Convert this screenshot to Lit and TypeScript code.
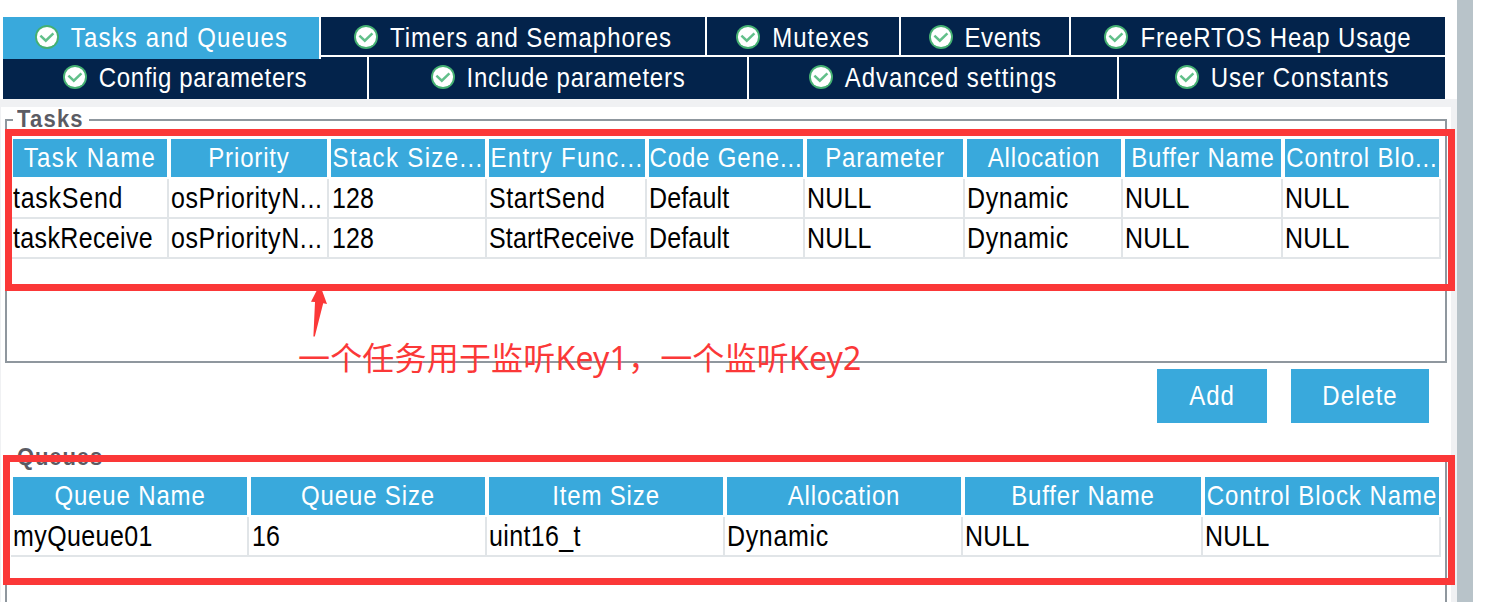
import { LitElement, html, css } from "lit";
import { customElement, property } from "lit/decorators.js";

const tracking: Record<string, number> = {
  "Tasks and Queues": 0.22,
  "Events": -0.35,
  "FreeRTOS Heap Usage": -0.12,
  "Config parameters": -0.3,
  "Include parameters": -0.2,
  "Task Name": 0.55,
  "Stack Size...": 0.5,
  "Entry Func...": 0.45,
  "Control Blo...": 0.05,
  "Control Block Name": 0.1,
  "osPriorityN...": 0.45,
  "taskSend": 0.6,
  "taskReceive": 0.2,
  "Dynamic": 0.5,
  "myQueue01": 0.25,
  "StartSend": 0.45,
  "StartReceive": 0.05,
  "uint16_t": 0.2,
};
const track = (s: string) => `--track:${tracking[s] ?? 0}px`;

@customElement("check-icon")
class CheckIcon extends LitElement {
  static styles = css`
    :host { display: block; width: 24px; height: 24px; flex: none; }
    svg { display: block; }
  `;
  render() {
    return html`<svg width="24" height="24" viewBox="0 0 24 24">
      <circle cx="12" cy="12" r="12" fill="#45b072" />
      <circle cx="12" cy="12" r="10.1" fill="#ffffff" />
      <path d="M5.4 10.6 L10.8 15.7 L18.4 8.4" fill="none" stroke="#62c08a" stroke-width="2.5" />
    </svg>`;
  }
}

@customElement("data-grid")
class DataGrid extends LitElement {
  @property({ attribute: false }) widths: number[] = [];
  @property({ attribute: false }) heads: string[] = [];
  @property({ attribute: false }) rows: string[][] = [];
  static styles = css`
    :host { display: block; }
    .row { display: grid; }
    .head { height: 38px; margin-bottom: 2px; }
    .th {
      margin: 0 2px; background: #39a9dc; color: #fff; display: flex;
      justify-content: center; align-items: center; overflow: hidden;
      white-space: nowrap; font-size: 24px; box-sizing: border-box; height: 38px;
      padding-bottom: 2px;
    }
    .td {
      height: 38px; border-right: 2px solid #e1e5e8; border-bottom: 2px solid #e1e5e8;
      color: #000; white-space: nowrap; overflow: hidden; font-size: 25px;
      line-height: 39px; padding-left: 2px;
    }
    .td.num { padding-left: 3px; }
    .th span {
      line-height: 36px; transform: translateY(1px) scaleY(1.18);
      letter-spacing: calc(0.85px + var(--track));
    }
    .td span {
      display: block; transform: scaleY(1.15); transform-origin: 50% 19px;
      letter-spacing: calc(0.15px + var(--track));
    }
  `;
  render() {
    const cols = `grid-template-columns:${this.widths.map((w) => w + "px").join(" ")}`;
    return html`
      <div class="row head" style=${cols}>
        ${this.heads.map((h) => html`<div class="th"><span style=${track(h)}>${h}</span></div>`)}
      </div>
      ${this.rows.map((r) => html`<div class="row" style=${cols}>
        ${r.map((c) => html`<div class="td ${/^\d+$/.test(c) ? "num" : ""}"><span style=${track(c)}>${c}</span></div>`)}
      </div>`)}
    `;
  }
}

@customElement("app-root")
class AppRoot extends LitElement {
  static styles = css`
    :host {
      display: block; position: relative; width: 1497px; height: 602px; overflow: hidden;
      background: #fff; font-family: "Liberation Sans", Arial, sans-serif;
    }
    .window { display: grid; grid-template-columns: 1457px 16px; height: 602px; }
    .scroll { background: #b8c3c9; }
    .main { display: flex; flex-direction: column; height: 602px; overflow: hidden; }
    .tabs { margin: 17px 12px 0 3px; flex: none; }
    .tabrow { display: grid; column-gap: 2px; }
    .first { grid-template-columns: 316px 384px 192px 168px 374px; height: 40px; }
    .second { grid-template-columns: 364px 378px 368px 326px; height: 42px; }
    .tab {
      background: #03234b; color: #fff; display: flex; align-items: center;
      justify-content: center; gap: 12px; font-size: 24px;
      white-space: nowrap; box-sizing: border-box;
    }
    .first .tab { height: 38px; padding-top: 2px; }
    .second .tab { height: 42px; padding-bottom: 2px; }
    .first .active {
      background: #39a9dc; height: 42px; padding: 0 0 2px 1px; position: relative;
      box-shadow: 2px 0 0 #fff;
    }
    .tab span {
      padding-top: 2px; transform: translateY(-1px) scaleY(1.18);
      letter-spacing: calc(0.95px + var(--track));
    }
    .btn span { padding-top: 2px; transform: translateY(-1px) scaleY(1.18); }
    .panel {
      flex: 1; border: solid #f0f1f3; border-width: 8px 6px 0 1px; padding: 0 4px;
      display: flex; flex-direction: column;
    }
    .group { border: 2px solid #8f979e; box-sizing: border-box; flex: none; }
    .tasks { height: 244px; margin-top: 12px; }
    .queues { height: 200px; margin-top: 34px; }
    .legend {
      background: #fff; width: 72px; height: 22px; line-height: 22px; margin: -12px 0 0 6px;
      padding-left: 4px; font-size: 22px; font-weight: bold; letter-spacing: 1.2px;
      color: #5b5b63; white-space: nowrap;
    }
    .legend.wide { width: 92px; letter-spacing: 0.9px; }
    .legend span { display: block; transform: scaleY(1.05); }
    data-grid { margin: 8px 0 0 4px; }
    .actions { display: flex; justify-content: flex-end; gap: 24px; padding: 6px 18px 0 0; }
    .btn {
      height: 54px; width: 110px; background: #39a9dc; color: #fff; font-size: 24px;
      letter-spacing: 1px; display: flex; align-items: center; justify-content: center;
      padding-bottom: 2px; box-sizing: border-box;
    }
    .btn.del { width: 138px; }
    .mark { position: absolute; border: 7px solid #fb3838; box-sizing: border-box; }
    .mark.one { left: 5px; top: 129px; width: 1450px; height: 162px; }
    .mark.two { left: 3px; top: 455px; width: 1452px; height: 130px; }
    .arrow { position: absolute; left: 306px; top: 286px; }
    .note {
      position: absolute; left: 298px; top: 334px; line-height: 48px; font-size: 32px;
      color: #fb3838; white-space: nowrap; letter-spacing: 0.18px;
      font-family: "Noto Sans", "Noto Sans CJK SC", sans-serif;
    }
  `;
  private tab(label: string, active = false) {
    return html`<div class="tab ${active ? "active" : ""}"><check-icon></check-icon><span style=${track(label)}>${label}</span></div>`;
  }
  render() {
    return html`
      <div class="window">
        <div class="main">
          <div class="tabs">
            <div class="tabrow first">
              ${this.tab("Tasks and Queues", true)}${this.tab("Timers and Semaphores")}
              ${this.tab("Mutexes")}${this.tab("Events")}${this.tab("FreeRTOS Heap Usage")}
            </div>
            <div class="tabrow second">
              ${this.tab("Config parameters")}${this.tab("Include parameters")}
              ${this.tab("Advanced settings")}${this.tab("User Constants")}
            </div>
          </div>
          <div class="panel">
            <div class="group tasks">
              <div class="legend"><span>Tasks</span></div>
              <data-grid
                .widths=${[158, 160, 158, 160, 158, 160, 158, 160, 158]}
                .heads=${["Task Name", "Priority", "Stack Size...", "Entry Func...", "Code Gene...", "Parameter", "Allocation", "Buffer Name", "Control Blo..."]}
                .rows=${[
                  ["taskSend", "osPriorityN...", "128", "StartSend", "Default", "NULL", "Dynamic", "NULL", "NULL"],
                  ["taskReceive", "osPriorityN...", "128", "StartReceive", "Default", "NULL", "Dynamic", "NULL", "NULL"],
                ]}
              ></data-grid>
            </div>
            <div class="actions">
              <div class="btn"><span>Add</span></div>
              <div class="btn del"><span>Delete</span></div>
            </div>
            <div class="group queues">
              <div class="legend wide"><span>Queues</span></div>
              <data-grid
                .widths=${[238, 238, 238, 238, 240, 238]}
                .heads=${["Queue Name", "Queue Size", "Item Size", "Allocation", "Buffer Name", "Control Block Name"]}
                .rows=${[["myQueue01", "16", "uint16_t", "Dynamic", "NULL", "NULL"]]}
              ></data-grid>
            </div>
          </div>
        </div>
        <div class="scroll"></div>
      </div>
      <div class="mark one"></div>
      <div class="mark two"></div>
      <svg class="arrow" width="24" height="54" viewBox="0 0 24 54">
        <path d="M11.5 3 L15.5 3 L21 18 L17.2 17.2 L8.8 50.5 L7.4 50.5 L9 16 L5 15.8 Z" fill="#fb3838" />
      </svg>
      <div class="note">一个任务用于监听Key1，一个监听Key2</div>
    `;
  }
}
